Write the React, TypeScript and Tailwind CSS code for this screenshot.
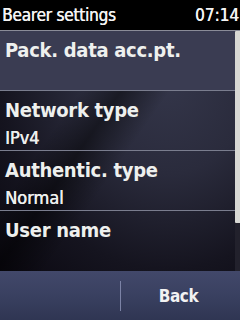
const items = [
  { title: "Pack. data acc.pt.", value: "", active: true },
  { title: "Network type", value: "IPv4" },
  { title: "Authentic. type", value: "Normal" },
  { title: "User name", value: "" },
];

export default function App() {
  return (
    <div className="w-[240px] h-[320px] overflow-hidden bg-black text-white font-['DejaVu_Sans_Condensed','DejaVu_Sans',sans-serif] flex flex-col">
      {/* Status bar */}
      <div className="h-[30px] shrink-0 flex items-center justify-between pl-[2px] pr-[1px] bg-black">
        <span className="text-[17px] font-normal tracking-[-0.2px] leading-none text-[#f4f4f4] [text-shadow:0.4px_0_0_#f4f4f4]">Bearer settings</span>
        <span className="text-[17px] font-normal leading-none text-[#f4f4f4] [text-shadow:0.4px_0_0_#f4f4f4]">07:14</span>
      </div>

      {/* List */}
      <div className="relative flex-1 border-t border-[#8a8c98] bg-[radial-gradient(ellipse_at_70%_20%,#34364a_0%,#2a2b3c_35%,#15141f_70%,#0a0810_100%)]">
        <div className="absolute inset-0 bg-[linear-gradient(125deg,transparent_0%,transparent_30%,rgba(0,0,0,0.45)_40%,transparent_52%,transparent_100%)]" />
        <div className="relative flex">
          <div className="flex-1 flex flex-col">
            {items.map((it, i) => (
              <div
                key={i}
                className={
                  "h-[60px] flex flex-col pl-[5px] pt-[7px] " +
                  (i < items.length - 1 ? "border-b border-[#7a7d8e] " : "") +
                  (it.active ? "bg-[#3a3c52]" : "")
                }
              >
                <span className="text-[20px] font-bold tracking-[-0.3px] leading-[24px] text-[#eef0ee]">{it.title}</span>
                {it.value && (
                  <span className="mt-[6px] text-[18px] leading-[20px] text-[#eef0ee] [text-shadow:0.4px_0_0_#eef0ee]">{it.value}</span>
                )}
              </div>
            ))}
          </div>
          {/* Scrollbar */}
          <div className="w-[5px] flex flex-col">
            <div className="h-[192px] bg-[#d8d8d4] rounded-l-[1px]" />
            <div className="flex-1 bg-[#22212c]" />
          </div>
        </div>
      </div>

      {/* Softkey bar */}
      <div className="h-[50px] shrink-0 flex items-center bg-[linear-gradient(180deg,#42486a_0%,#394060_50%,#2f3552_100%)]">
        <div className="w-[120px] h-full" />
        <div className="w-[1px] h-[30px] bg-[#7c83a6]" />
        <div className="flex-1 flex items-center justify-center pr-[4px]">
          <span className="text-[17px] font-bold tracking-[-0.4px] leading-none text-[#f2f2f2]">Back</span>
        </div>
      </div>
    </div>
  );
}
